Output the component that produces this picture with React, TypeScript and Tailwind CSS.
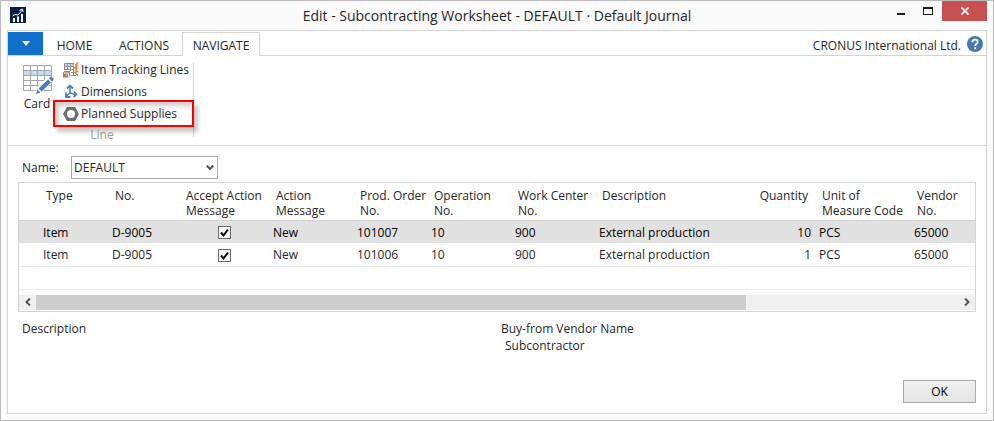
import type { ReactNode } from "react";

type Line = { type: string; no: string; action: string; order: string; op: string; center: string; description: string; qty: number; unit: string; vendor: string };

const lines: Line[] = [
  { type: "Item", no: "D-9005", action: "New", order: "101007", op: "10", center: "900", description: "External production", qty: 10, unit: "PCS", vendor: "65000" },
  { type: "Item", no: "D-9005", action: "New", order: "101006", op: "10", center: "900", description: "External production", qty: 1, unit: "PCS", vendor: "65000" },
];

const columns: { first: string; second?: string; width: string; right?: boolean }[] = [
  { first: "Type", width: "w-[69px]" },
  { first: "No.", width: "w-[71px]" },
  { first: "Accept Action", second: "Message", width: "w-[90px]" },
  { first: "Action", second: "Message", width: "w-[84px]" },
  { first: "Prod. Order", second: "No.", width: "w-[74px]" },
  { first: "Operation", second: "No.", width: "w-[84px]" },
  { first: "Work Center", second: "No.", width: "w-[84px]" },
  { first: "Description", width: "w-[130px]" },
  { first: "Quantity", width: "w-[90px]", right: true },
  { first: "Unit of", second: "Measure Code", width: "w-[95px]" },
  { first: "Vendor", second: "No.", width: "" },
];

function AppLogo() {
  return (
    <svg width="16" height="16" viewBox="0 0 16 16" aria-hidden="true">
      <rect width="16" height="16" fill="#08204b" />
      <path d="M3 11h2v4H3zM7 9.500h2V15H7zM11 7h2v8h-2z" fill="#fff" />
      <path d="M2.500 9 5 7.500l3 .5 4.500-5M9.500 3.500l3-1.500.5 3" fill="none" stroke="#fff" />
    </svg>
  );
}

function CardIcon() {
  return (
    <svg width="32" height="30" viewBox="0 0 32 30" aria-hidden="true">
      <path d="M1 1h28v25H1z" fill="#fff" />
      <path d="M1 6h28v5H1z" fill="#c5dbf1" />
      <path d="M.5.5h28v25H.5zM.5 5.500h28M.5 10.500h28M.5 15.500h28M.5 20.500h28M7.500.5v25M14.500.5v25M21.500.5v25" fill="none" stroke="#a6a6a6" />
      <path d="m11 30 3-8 12-11 5 4-13 13z" fill="#fff" />
      <path d="m13 29 1.500-4.500 3 3zM15.500 23.500 25 14.500l3 3-9.500 9zM26 13.500l1.500-1.500H29l1.500 1.500V15L29 16.500z" fill="#4a7ebb" />
    </svg>
  );
}

function TrackingIcon() {
  return (
    <svg width="16" height="16" viewBox="0 0 16 16" aria-hidden="true">
      <path d="M1.500 8V1.500H11M1.500 4.500H11M1.500 7.500H11M8 10.500h4M8 13.500h5M4.500 1.500V8M7.500 1.500V9M10.500 1.500v12" fill="none" stroke="#8b8b8b" />
      <path d="M2 2h9v2H2z" fill="#a9bdd0" opacity=".6" />
      <path d="m15.500.5-3 2 1 2-2 1 2 1.500-1 1.500 2 1-2 1.500 2.500 2.500M12.500 3h3M12.500 6h3M12.500 9.500h3" fill="none" stroke="#e8762c" strokeWidth="1.200" />
      <path d="M0 10.500 1.500 9H7v5l-1.500 1.500H0z" fill="#a17c5b" />
      <path d="M1 11h4.500v4M2.500 13H4" fill="none" stroke="#f5eee6" />
    </svg>
  );
}

function DimensionsIcon() {
  return (
    <svg width="16" height="16" viewBox="0 0 16 16" aria-hidden="true">
      <path d="M7 2.500V9l5 1.500M7 9l-3.500 3" fill="none" stroke="#4a7ebb" strokeWidth="1.600" />
      <path d="M4 4.500 7 1.500l3 3M11 7.500l2.500 3-3 2.500M3 8.500V13h4.500" fill="none" stroke="#4a7ebb" strokeWidth="1.800" />
    </svg>
  );
}

function SuppliesIcon() {
  return (
    <svg width="16" height="16" viewBox="0 0 16 16" aria-hidden="true">
      <path fillRule="evenodd" d="M4 1h8l4 7-4 7H4L0 8zM8 4a4 4 0 1 0 0 8 4 4 0 0 0 0-8" fill="#6d6d6d" />
    </svg>
  );
}

function RibbonItem({ icon, label, children }: { icon: ReactNode; label: string; children?: ReactNode }) {
  return (
    <button type="button" className="relative flex h-[22px] items-center gap-0.5 whitespace-nowrap">
      {icon}
      {label}
      {children}
    </button>
  );
}

function TitleBar() {
  return (
    <header className="flex h-[29px] shrink-0 items-start justify-between pl-[3px]">
      <div className="flex w-24 pt-1.5"><AppLogo /></div>
      <h1 className="pt-[3px] text-[14px] leading-6">Edit - Subcontracting Worksheet - DEFAULT · Default Journal</h1>
      <div className="flex h-5">
        <button type="button" aria-label="Minimize" className="flex w-[26px] items-center justify-center">
          <svg width="8" height="8" viewBox="0 0 8 8"><path d="M0 6h8v2H0z" fill="#1e1e1e" /></svg>
        </button>
        <button type="button" aria-label="Maximize" className="flex w-[28px] items-center justify-center">
          <svg width="10" height="8" viewBox="0 0 10 8"><path fillRule="evenodd" d="M0 0h10v8H0zM1 2v5h8V2z" fill="#1e1e1e" /></svg>
        </button>
        <button type="button" aria-label="Close" className="flex w-[45px] items-center justify-center bg-[#c75050]">
          <svg width="8" height="8" viewBox="0 0 8 8"><path d="m.5.5 7 7M7.500.5l-7 7" stroke="#fff" strokeWidth="1.700" /></svg>
        </button>
      </div>
    </header>
  );
}

function TabBar() {
  return (
    <nav className="flex h-[25px] shrink-0 items-stretch border-b border-[#d4d4d4] pt-px">
      <button type="button" aria-label="Application menu" className="flex w-[35px] items-center justify-center bg-[#1070c9]">
        <svg width="8" height="5" viewBox="0 0 8 5"><path d="M0 0h8L4 5z" fill="#fff" /></svg>
      </button>
      <button type="button" className="w-[63px] pt-1">HOME</button>
      <button type="button" className="w-[76px] pt-1">ACTIONS</button>
      <button type="button" className="-mb-px w-[78px] border border-b-0 border-[#d4d4d4] bg-white pt-0.5">NAVIGATE</button>
      <div className="ml-auto flex items-center gap-1.5 pr-[3px]">
        <span className="pt-1">CRONUS International Ltd.</span>
        <button type="button" aria-label="Help">
          <svg width="16" height="16" viewBox="0 0 16 16">
            <circle cx="8" cy="8" r="8" fill="#4579b5" />
            <path d="M5.300 6.200C5.300 4.400 6.400 3.600 8 3.600s2.700.9 2.700 2.300c0 1.800-2.500 2-2.500 4" fill="none" stroke="#fff" strokeWidth="1.800" />
            <path d="M7.200 11.300h2v1.900h-2z" fill="#fff" />
          </svg>
        </button>
      </div>
    </nav>
  );
}

function Ribbon() {
  return (
    <section className="flex h-[90px] shrink-0 border-b border-[#d4d4d4] pt-[7px] pb-2">
      <div className="flex border-r border-[#d4d4d4] pl-[15px]">
        <button type="button" className="flex w-8 flex-col items-center gap-px self-start pt-0.5">
          <CardIcon />
          <span className="pr-1 leading-4">Card</span>
        </button>
        <div className="flex w-[138px] flex-col items-start pl-2">
          <div className="-mt-1">
            <RibbonItem icon={<TrackingIcon />} label="Item Tracking Lines" />
            <RibbonItem icon={<DimensionsIcon />} label="Dimensions" />
            <RibbonItem icon={<SuppliesIcon />} label="Planned Supplies">
              <span className="pointer-events-none absolute -left-2.5 -top-[3px] h-[27px] w-[141px] border-2 border-[#fb0000] shadow-[4px_5px_4px_#00000038,inset_4px_4px_4px_#00000030]" />
            </RibbonItem>
          </div>
          <span className="w-[78px] text-center leading-5 text-[#a0a0a0]">Line</span>
        </div>
      </div>
    </section>
  );
}

function WorksheetTable() {
  return (
    <div className="border border-[#d4d4d4]">
      <table className="w-full table-fixed border-collapse text-left">
        <colgroup>
          <col className="w-5" />
          {columns.map((c) => <col key={c.first} className={c.width} />)}
        </colgroup>
        <thead>
          <tr className="h-[37px] border-b border-[#d4d4d4] align-top leading-[15px]">
            <th className="p-0" />
            {columns.map((c) => (
              <th key={c.first} className={"whitespace-nowrap px-[7px] pt-[5px] pb-0 font-normal " + (c.right ? "text-right" : "")}>
                {c.first}
                {c.second && <><br />{c.second}</>}
              </th>
            ))}
          </tr>
        </thead>
        <tbody className="[&_td]:whitespace-nowrap [&_td]:px-1 [&_td]:pb-0 [&_td]:pt-0.5">
          {lines.map((l, i) => (
            <tr key={l.order} className={i === 0 ? "h-[23px] bg-[#e1e1e1] text-black" : "h-[23px] border-b border-[#ececec]"}>
              <td />
              <td>{l.type}</td>
              <td>{l.no}</td>
              <td>
                <span className="relative mx-auto block size-[13px]">
                  <input type="checkbox" defaultChecked aria-label={"Accept action message for order " + l.order} className="peer block size-[13px] appearance-none border border-[#6b6b6b] bg-white" />
                  <svg className="pointer-events-none absolute inset-0 hidden peer-checked:block" width="13" height="13" viewBox="0 0 13 13"><path d="m3 6.500 2.500 3L10 3.500" fill="none" stroke="#000" strokeWidth="2" /></svg>
                </span>
              </td>
              <td>{l.action}</td>
              <td>{l.order}</td>
              <td>{l.op}</td>
              <td>{l.center}</td>
              <td>{l.description}</td>
              <td className="text-right">{l.qty}</td>
              <td>{l.unit}</td>
              <td>{l.vendor}</td>
            </tr>
          ))}
          <tr className="h-[23px] border-b border-[#ececec]"><td colSpan={12} /></tr>
        </tbody>
      </table>
      <div className="mt-[5px] mb-px flex h-[15px] bg-[#f0f0f0]">
        <button type="button" aria-label="Scroll left" className="flex w-[17px] items-center justify-center">
          <svg width="6" height="8" viewBox="0 0 6 8"><path d="M5 .5 1.500 4 5 7.500" fill="none" stroke="#555" strokeWidth="2" /></svg>
        </button>
        <div className="flex-1"><div className="h-full w-[77%] bg-[#cdcdcd]" /></div>
        <button type="button" aria-label="Scroll right" className="flex w-[17px] items-center justify-center">
          <svg width="6" height="8" viewBox="0 0 6 8"><path d="M1 .5 4.500 4 1 7.500" fill="none" stroke="#555" strokeWidth="2" /></svg>
        </button>
      </div>
    </div>
  );
}

export default function App() {
  return (
    <div className="flex min-h-screen flex-col border border-[#bbb] bg-[#fbfbfb] px-1.5 pb-1.5 font-['Open_Sans','Noto_Sans',sans-serif] text-[12px] leading-4 text-[#262626]">
      <TitleBar />
      <div className="flex flex-1 flex-col border border-[#d4d4d4] bg-white">
        <TabBar />
        <Ribbon />
        <main className="flex flex-1 flex-col px-2.5 pt-2.5 pb-2.5">
          <div className="mb-[3px] flex items-center pl-1">
            <label htmlFor="name" className="w-[49px]">Name:</label>
            <div className="relative">
              <select id="name" defaultValue="DEFAULT" className="block h-[23px] w-[147px] appearance-none border border-[#ababab] bg-white pl-0.5 pr-5">
                <option>DEFAULT</option>
              </select>
              <svg className="pointer-events-none absolute right-1 top-2" width="8" height="7" viewBox="0 0 8 7"><path d="m.7 1.500 3.300 3.500 3.300-3.500" fill="none" stroke="#555" strokeWidth="1.900" /></svg>
            </div>
          </div>
          <WorksheetTable />
          <dl className="grid grid-cols-2 pt-2 leading-[17px]">
            <div className="px-1"><dt>Description</dt></div>
            <div className="px-1"><dt>Buy-from Vendor Name</dt><dd className="px-1">Subcontractor</dd></div>
          </dl>
          <button type="button" className="mt-auto h-[23px] w-[73px] self-end border border-[#ababab] bg-linear-to-b from-[#f1f1f1] to-[#e4e4e4] text-black">OK</button>
        </main>
      </div>
    </div>
  );
}
